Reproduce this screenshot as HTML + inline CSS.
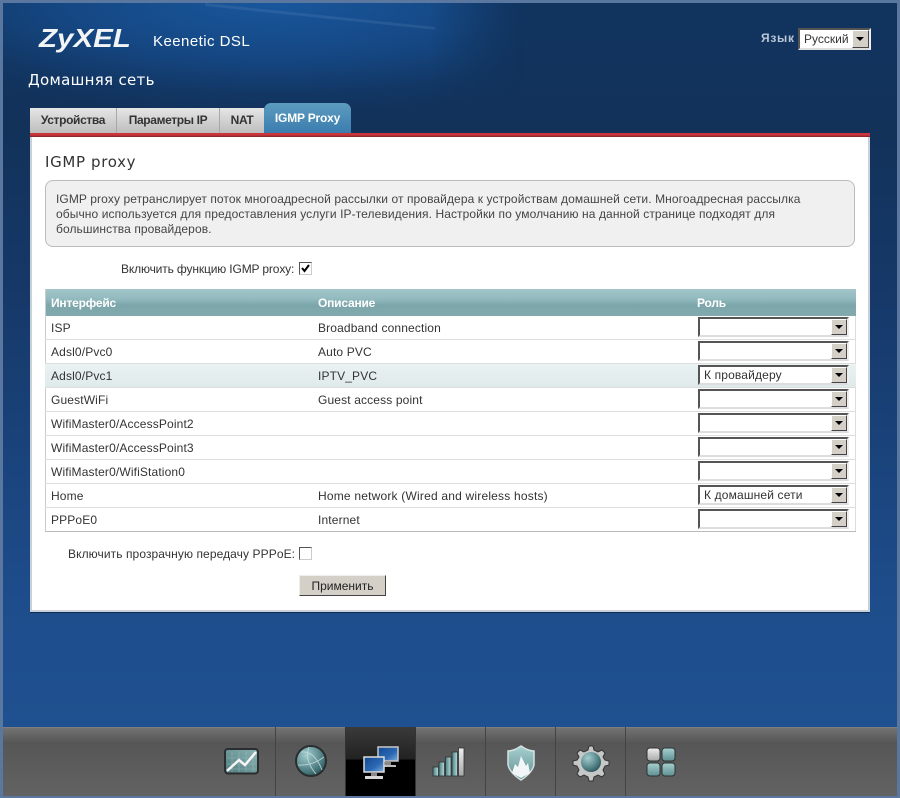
<!DOCTYPE html>
<html><head><meta charset="utf-8"><style>
html,body{margin:0;padding:0;width:900px;height:798px;overflow:hidden;background:#5a789f}
body{font-family:"Liberation Sans",sans-serif;font-size:12px;color:#333;position:relative}
.a{position:absolute;white-space:nowrap}
#bg{left:3px;top:3px;width:894px;height:724px;background:linear-gradient(#11345f 0,#12325a 130px,#16396a 300px,#1e4d8c 600px,#1f508f 724px)}
#gl{left:3px;top:3px;width:520px;height:115px;background:radial-gradient(ellipse 430px 112px at 270px 0,rgba(28,96,172,.8) 0,rgba(24,84,155,.6) 50%,rgba(20,70,130,.22) 82%,rgba(18,50,90,0) 100%);-webkit-mask-image:linear-gradient(to right,#000 82%,transparent 100%);mask-image:linear-gradient(to right,#000 82%,transparent 100%)}
#st{left:205px;top:3px;width:230px;height:30px}
.tab{top:108px;height:25px;background:linear-gradient(#e6e6e6,#bdbdbd);border-right:1px solid #a8a8a8;color:#333;font-weight:bold;font-size:12px;line-height:25px;text-align:center;box-sizing:border-box;letter-spacing:-.35px}
.sel{position:absolute;left:698px;width:151px;height:20px;box-sizing:border-box;background:#fff;border:2px solid;border-color:#555 #eee #ddd #555;font-size:12px;line-height:16px;padding-left:4px;color:#333;letter-spacing:.15px}
.sel i{position:absolute;right:0;top:0;width:16px;height:16px;background:#d4d0c8;border:1px solid;border-color:#fff #444 #444 #fff;box-sizing:border-box}
.sel i:after{content:"";position:absolute;left:3px;top:5px;border:4px solid transparent;border-top:4px solid #000;border-bottom:0}
.row{position:absolute;left:45px;width:811px;height:23px;border-bottom:1px solid #ddd;line-height:23px;font-size:12px;color:#333;letter-spacing:.14px}
.row span{position:absolute;top:1px}
.row .c1{left:6px}.row .c2{left:273px}
.sep{position:absolute;top:727px;width:1px;height:69px;background:#444}
.th{top:296px;color:#fff;font-weight:bold;font-size:12px;letter-spacing:-.2px}
</style></head><body>
<div class="a" id="bg"></div><div class="a" id="gl"></div>
<svg class="a" id="st" viewBox="0 0 230 30"><path d="M0 0 L230 24 L232 27 L0 3Z" fill="#7fa4cf" opacity=".16"/></svg>

<div class="a" style="left:39px;top:23px;font:italic bold 26px 'Liberation Sans',sans-serif;color:#f2f4f6;transform-origin:0 0;transform:scaleX(1.135)">ZyXEL</div>
<div class="a" style="left:153px;top:33px;font-size:15px;color:#fff;letter-spacing:.45px">Keenetic DSL</div>
<div class="a" style="left:28px;top:71px;color:#fff;font-family:'DejaVu Sans',sans-serif;font-size:15px;letter-spacing:.3px">Домашняя сеть</div>

<div class="a" style="left:761px;top:31px;font-size:12px;color:#b9c6d6;font-weight:bold;letter-spacing:.7px">Язык</div>
<div class="a" style="left:798px;top:28px;width:73px;height:22px;box-sizing:border-box;background:#fff;border:2px solid;border-color:#555 #eee #ddd #555;line-height:18px;padding-left:4px;color:#333;font-size:12px">Русский<i style="position:absolute;right:0;top:0;width:17px;height:18px;background:#d4d0c8;border:1px solid;border-color:#fff #444 #444 #fff;box-sizing:border-box"><b style="position:absolute;left:3px;top:6px;border:4px solid transparent;border-top:4px solid #000;border-bottom:0"></b></i></div>

<div class="a tab" style="left:30px;width:87px">Устройства</div>
<div class="a tab" style="left:117px;width:103px">Параметры IP</div>
<div class="a tab" style="left:220px;width:44px;border-right:0">NAT</div>
<div class="a" style="left:264px;top:103px;width:87px;height:30px;border-radius:7px 7px 0 0;background:linear-gradient(#5d9cc0,#3a7cae);color:#fff;font-weight:bold;font-size:12px;text-align:center;line-height:30px;letter-spacing:-.2px">IGMP Proxy</div>

<div class="a" style="left:30px;top:133px;width:840px;height:4px;background:linear-gradient(#c9353a 0,#c9353a 2px,#7a2226 4px)"></div>
<div class="a" style="left:30px;top:137px;width:840px;height:475px;box-sizing:border-box;background:#fff;border:2px solid #c8d0da;border-top:0;box-shadow:0 1px 0 #0d2c55"></div>

<div class="a" style="left:45px;top:153px;font:15px 'DejaVu Sans',sans-serif;color:#333;letter-spacing:.65px">IGMP proxy</div>
<div class="a" style="left:45px;top:180px;width:810px;height:67px;box-sizing:border-box;background:#f0f0f0;border:1px solid #bbb;border-radius:8px;padding:11px 10px 0;font-size:12px;line-height:15px;color:#444;letter-spacing:.09px">IGMP proxy ретранслирует поток многоадресной рассылки от провайдера к устройствам домашней сети. Многоадресная рассылка<br>обычно используется для предоставления услуги IP-телевидения. Настройки по умолчанию на данной странице подходят для<br>большинства провайдеров.</div>

<div class="a" style="left:121px;top:262px;font-size:12px;color:#333;letter-spacing:-.14px">Включить функцию IGMP proxy:</div>
<div class="a" style="left:299px;top:262px;width:13px;height:13px;box-sizing:border-box;border:1px solid;border-color:#555 #ccc #ccc #555;background:#fff"><svg width="11" height="11" style="display:block"><path d="M2 5 L4.500 8 L9 2" fill="none" stroke="#000" stroke-width="2"/></svg></div>

<div class="a" style="left:45px;top:289px;width:811px;height:27px;background:linear-gradient(#a2c6ca 0,#92babe 10px,#7ca6aa 16px,#80aaae 100%);border-left:1px solid #ccc;box-sizing:border-box"></div>
<div class="a th" style="left:51px">Интерфейс</div>
<div class="a th" style="left:318px">Описание</div>
<div class="a th" style="left:697px">Роль</div>

<div class="a" style="left:45px;top:316px;width:1px;height:216px;background:#ccc"></div>
<div class="a" style="left:855px;top:316px;width:1px;height:216px;background:#ddd"></div>

<div class="row" style="top:316px"><span class="c1">ISP</span><span class="c2">Broadband connection</span></div>
<div class="row" style="top:340px"><span class="c1">Adsl0/Pvc0</span><span class="c2">Auto PVC</span></div>
<div class="row" style="top:364px;background:linear-gradient(#eaf2f2,#dfeaea)"><span class="c1">Adsl0/Pvc1</span><span class="c2">IPTV_PVC</span></div>
<div class="row" style="top:388px"><span class="c1">GuestWiFi</span><span class="c2">Guest access point</span></div>
<div class="row" style="top:412px"><span class="c1">WifiMaster0/AccessPoint2</span></div>
<div class="row" style="top:436px"><span class="c1">WifiMaster0/AccessPoint3</span></div>
<div class="row" style="top:460px"><span class="c1">WifiMaster0/WifiStation0</span></div>
<div class="row" style="top:484px"><span class="c1">Home</span><span class="c2" style="letter-spacing:.2px">Home network (Wired and wireless hosts)</span></div>
<div class="row" style="top:508px;border-bottom-color:#bbb"><span class="c1">PPPoE0</span><span class="c2">Internet</span></div>

<div class="sel" style="top:317px"><i></i></div>
<div class="sel" style="top:341px"><i></i></div>
<div class="sel" style="top:365px">К провайдеру<i></i></div>
<div class="sel" style="top:389px"><i></i></div>
<div class="sel" style="top:413px"><i></i></div>
<div class="sel" style="top:437px"><i></i></div>
<div class="sel" style="top:461px"><i></i></div>
<div class="sel" style="top:485px">К домашней сети<i></i></div>
<div class="sel" style="top:509px"><i></i></div>

<div class="a" style="left:68px;top:547px;font-size:12px;color:#333;letter-spacing:.09px">Включить прозрачную передачу PPPoE:</div>
<div class="a" style="left:299px;top:547px;width:13px;height:13px;box-sizing:border-box;border:1px solid;border-color:#555 #ccc #ccc #555;background:#fff"></div>
<div class="a" style="left:299px;top:575px;width:87px;height:21px;box-sizing:border-box;background:#d4d0c8;border:1px solid;border-color:#eee #444 #444 #eee;text-align:center;line-height:20px;font-size:12px;color:#222">Применить</div>

<!-- bottom bar -->
<div class="a" style="left:3px;top:727px;width:894px;height:69px;background:linear-gradient(#8a8a8a 0,#727272 1px,#565656 16px,#5c5c5c 40px,#626262 69px)"></div>
<div class="a" style="left:346px;top:727px;width:70px;height:69px;background:linear-gradient(#3a3a3a 0,#222 32px,#000 33px,#000 100%)"></div>
<div class="sep" style="left:275px"></div><div class="sep" style="left:345px;background:#333"></div><div class="sep" style="left:415px;background:#333"></div><div class="sep" style="left:485px"></div><div class="sep" style="left:555px"></div><div class="sep" style="left:625px"></div>

<svg class="a" style="left:0;top:727px;filter:blur(.35px)" width="900" height="69" viewBox="0 727 900 69">
<defs>
<linearGradient id="t" x1="0" y1="0" x2="0" y2="1"><stop offset="0" stop-color="#a8d0d0"/><stop offset="1" stop-color="#5f9092"/></linearGradient>
<linearGradient id="h" x1="0" y1="0" x2="1" y2="0"><stop offset="0" stop-color="#4d7e80"/><stop offset="1" stop-color="#b6dcdc"/></linearGradient>
<linearGradient id="c" x1="0" y1="1" x2="1" y2="0"><stop offset="0" stop-color="#4f7c7e"/><stop offset="1" stop-color="#8db3b4"/></linearGradient>
<linearGradient id="g" x1="0" y1="0" x2="0" y2="1"><stop offset="0" stop-color="#eeeeee"/><stop offset="1" stop-color="#a8a8a8"/></linearGradient>
<linearGradient id="b" x1="0" y1="0" x2="1" y2="1"><stop offset="0" stop-color="#134a90"/><stop offset=".6" stop-color="#2c68b4"/><stop offset="1" stop-color="#7fb0e0"/></linearGradient>
<radialGradient id="r" cx=".35" cy=".3" r=".8"><stop offset="0" stop-color="#a4cdd0"/><stop offset=".7" stop-color="#4a7a7e"/><stop offset="1" stop-color="#254c50"/></radialGradient>
</defs>
<!-- chart -->
<rect x="225" y="749" width="33" height="24.500" rx="3" fill="url(#c)" stroke="#2a2e2e" stroke-width="2"/>
<path d="M232 752v20M239 752v20M246 752v20M253 752v20M227 758h29M227 764h29M227 769h29" stroke="#a8c8c8" stroke-width=".6" opacity=".6"/>
<path d="M227 771 L239 760 L245 765 L256 752" fill="none" stroke="#f6f6f6" stroke-width="2.500"/>
<!-- globe -->
<circle cx="311" cy="761" r="15" fill="url(#r)" stroke="#2a2e2e" stroke-width="2"/>
<path d="M301 752 Q314 750 322 770 M309 747 Q304 760 316 774 M298 765 Q312 766 324 757" fill="none" stroke="#c6dfe0" stroke-width="1" opacity=".8"/>
<!-- network -->
<rect x="378" y="747" width="20" height="14" fill="url(#b)" stroke="#c8c8c8" stroke-width="1.500"/>
<rect x="385" y="762" width="6" height="3" fill="#8a8a8a"/><rect x="380" y="765" width="16" height="2" fill="#bbb"/>
<rect x="364" y="757" width="20" height="15" fill="url(#b)" stroke="#dcdcdc" stroke-width="1.500"/>
<rect x="371" y="773" width="6" height="3" fill="#8a8a8a"/><rect x="365" y="776" width="18" height="3" fill="#d8d8d8"/>
<!-- signal -->
<g stroke="#2e3434" stroke-width=".8"><rect x="433" y="767" width="5.500" height="9" fill="url(#h)"/><rect x="439" y="762" width="5.500" height="14" fill="url(#h)"/><rect x="445.500" y="757" width="5.500" height="19" fill="url(#h)"/><rect x="452" y="752" width="5.500" height="24" fill="url(#h)"/><rect x="458.500" y="748" width="5.500" height="28" fill="url(#g)"/></g>
<!-- shield -->
<path d="M521 746 Q514 751 508 751 L508 765 Q510 773 521 780 Q532 773 534 765 L534 751 Q528 751 521 746Z" fill="url(#t)" stroke="#d6e2e2" stroke-width="1.500"/>
<path d="M512 773 L515 764 L518 767 L521 756 L526 766 L528 763 L530 773 L521 778Z" fill="#f2f6f6"/>
<!-- gear -->
<path d="M589 746 h4 l1 4 l4 2 l4 -2 l3 3 l-2 4 l2 3 l4 1 v4 l-4 1 l-2 4 l2 4 l-3 3 l-4 -2 l-4 2 l-1 4 h-4 l-1 -4 l-4 -2 l-4 2 l-3 -3 l2 -4 l-2 -4 l-4 -1 v-4 l4 -1 l2 -3 l-2 -4 l3 -3 l4 2 l4 -2Z" fill="#c6c8c8" stroke="#333" stroke-width="1"/>
<circle cx="591" cy="762" r="10" fill="url(#r)"/>
<!-- grid -->
<g stroke="#2e3434" stroke-width="1"><rect x="647" y="748" width="13" height="13" rx="3" fill="url(#g)"/><rect x="662" y="748" width="13" height="13" rx="3" fill="url(#t)"/><rect x="647" y="763" width="13" height="13" rx="3" fill="url(#t)"/><rect x="662" y="763" width="13" height="13" rx="3" fill="url(#t)"/></g>
</svg>
</body></html>
